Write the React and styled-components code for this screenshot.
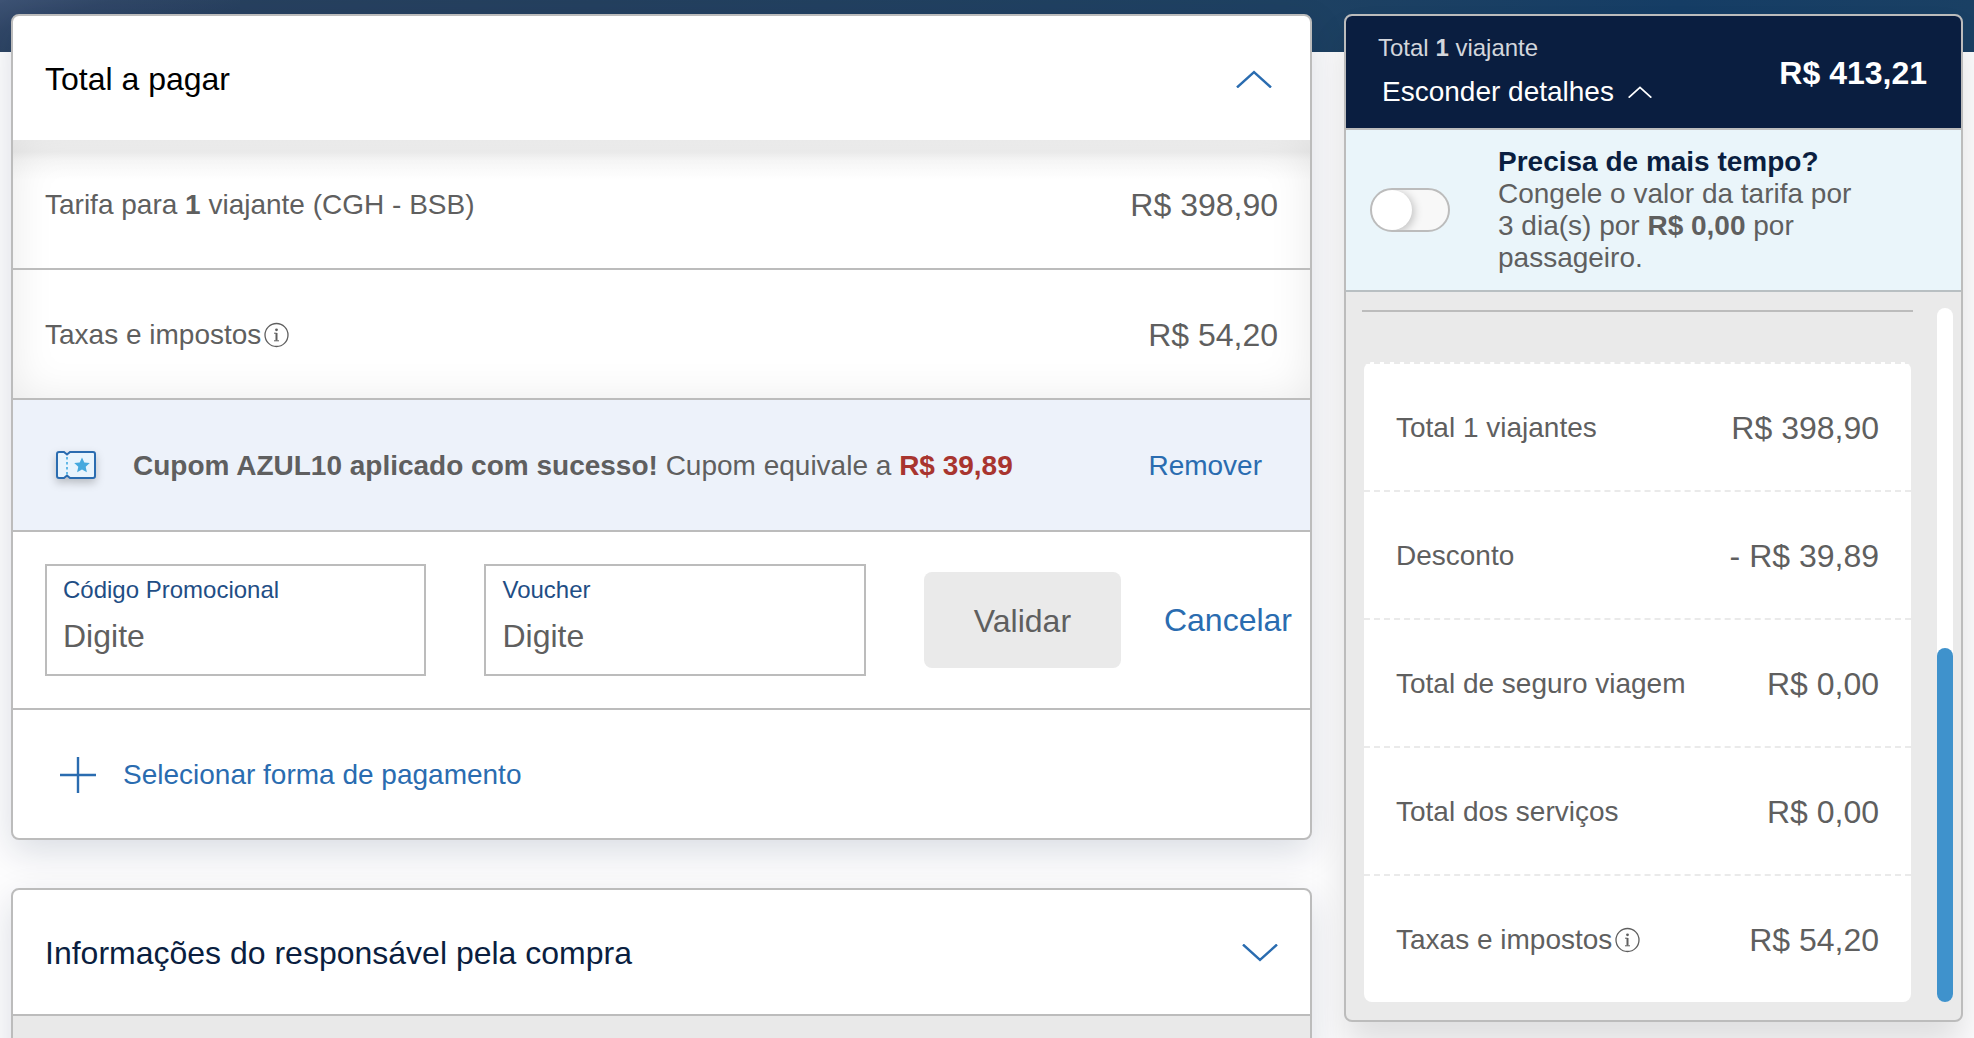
import React, { useState } from 'react';
import styled, { createGlobalStyle } from 'styled-components';

const BLUE = '#2a6cb0';
const NAVY = '#0a1e40';
const GREY = '#5f5f5f';
const LINE = '#bcbcbc';

const GlobalStyle = createGlobalStyle`
  *, *::before, *::after {
    box-sizing: border-box;
  }

  body {
    margin: 0;
    overflow: hidden;
    background: #fdfdfe;
    color: ${GREY};
    font-family: "Liberation Sans", Arial, sans-serif;
    font-size: 28px;
    line-height: 32px;
  }

  button, input {
    font: inherit;
  }
`;

const Page = styled.div`
  min-height: 100vh;
  padding: 14px 11px 0;
  background:
    linear-gradient(165deg, rgba(70, 90, 125, 0.7) 0, rgba(60, 80, 115, 0.4) 30px, transparent 70px) no-repeat 0 0 / 240px 52px,
    linear-gradient(90deg, #29415f 0%, #24405f 30%, #1e4162 65%, #153d65 85%, #1a4064 100%) no-repeat 0 0 / 100% 52px;
`;

const Layout = styled.div`
  display: grid;
  grid-template-columns: minmax(0, 1301fr) minmax(0, 619fr);
  gap: 32px;
  align-items: start;
`;

const Column = styled.main`
  display: flex;
  flex-direction: column;
  gap: 48px;
`;

const Card = styled.section`
  border: 2px solid ${LINE};
  border-radius: 8px;
  background: #fff;
  box-shadow: 0 12px 36px rgba(10, 30, 64, 0.14);
`;

const CardHeader = styled.header`
  display: flex;
  align-items: center;
  justify-content: space-between;
  min-height: 124px;
  padding: 2px 32px 0;
`;

const CardTitle = styled.h2`
  margin: 0;
  font-size: 32px;
  font-weight: 400;
  color: ${props => props.$color};
`;

const IconButton = styled.button`
  display: flex;
  margin-right: ${props => (props.$open ? '6px' : '0')};
  padding: 0;
  border: 0;
  background: none;
  color: ${BLUE};
  cursor: pointer;
`;

const Fares = styled.dl`
  margin: 0;
  background: linear-gradient(#f5f5f5 0, #f0f0f0 12px, #f8f8f8 20px, #fff 40px);
  box-shadow: inset 0 0 44px rgba(0, 0, 0, 0.09);
`;

const Row = styled.div`
  display: flex;
  align-items: center;
  justify-content: space-between;
  min-height: 130px;
  padding: 2px 32px 0;
  border-bottom: 2px solid ${LINE};
`;

const Term = styled.dt`
  display: flex;
  align-items: center;
  white-space: pre;
`;

const Amount = styled.dd`
  margin: 0;
  font-size: 32px;
  white-space: nowrap;
`;

const CouponRow = styled(Row)`
  min-height: 132px;
  padding: 2px 48px 0 40px;
  background: #edf2fa;
`;

const CouponMessage = styled.p`
  display: flex;
  align-items: center;
  gap: 32px;
  margin: 0;
`;

const Saving = styled.strong`
  color: #a8352f;
`;

const TextButton = styled.button`
  display: flex;
  align-items: center;
  gap: 24px;
  padding: 0;
  border: 0;
  background: none;
  color: ${props => props.$color || BLUE};
  font-size: ${props => (props.$large ? '32px' : '28px')};
  line-height: 32px;
  cursor: pointer;
`;

const PromoForm = styled.form`
  display: flex;
  align-items: center;
  padding: 32px 18px 32px 32px;
  border-bottom: 2px solid ${LINE};
`;

const Field = styled.label`
  display: flex;
  flex: 1 1 0;
  flex-direction: column;
  gap: 12px;
  min-width: 0;
  height: 112px;
  margin-right: 58px;
  padding: 8px 16px;
  border: 2px solid ${LINE};
  color: #1f4e85;
  font-size: 24px;
`;

const FieldInput = styled.input`
  width: 100%;
  height: 36px;
  padding: 0;
  border: 0;
  outline: 0;
  background: none;
  color: ${GREY};
  font-size: 32px;

  &::placeholder {
    color: ${GREY};
    opacity: 1;
  }
`;

const SubmitButton = styled.button`
  width: 197px;
  height: 96px;
  margin-right: 43px;
  padding: 2px 0 0;
  border: 0;
  border-radius: 8px;
  background: #eaeaea;
  color: ${GREY};
  font-size: 32px;
`;

const PaymentRow = styled.div`
  display: flex;
  align-items: center;
  min-height: 128px;
  padding: 2px 44px 0;
`;

const ClosedBody = styled.div`
  height: 96px;
  border-top: 2px solid ${LINE};
  background: #e9e9e9;
`;

const Summary = styled.aside`
  overflow: hidden;
  border: 2px solid ${LINE};
  border-radius: 8px;
  background: #eaeaea;
  box-shadow: 0 24px 36px rgba(0, 0, 0, 0.12);
`;

const SummaryHeader = styled.header`
  display: flex;
  align-items: center;
  justify-content: space-between;
  height: 114px;
  padding: 0 34px 0 32px;
  border-bottom: 2px solid ${LINE};
  background: ${NAVY};
  color: #fff;
`;

const SummaryLead = styled.div`
  display: flex;
  flex-direction: column;
  gap: 12px;
  padding-bottom: 4px;
`;

const Travellers = styled.p`
  margin: 0;
  color: #d3d6dc;
  font-size: 24px;
`;

const ToggleDetails = styled(TextButton)`
  gap: 14px;
  padding-left: 4px;
`;

const SummaryTotal = styled.strong`
  padding-top: 2px;
  font-size: 32px;
`;

const Freeze = styled.label`
  display: flex;
  align-items: center;
  gap: 48px;
  height: 162px;
  padding: 0 100px 0 24px;
  border-bottom: 2px solid #b8bfc2;
  background: #eaf5fa;
`;

const Switch = styled.input`
  display: flex;
  flex: none;
  appearance: none;
  width: 80px;
  height: 44px;
  margin: 0;
  overflow: hidden;
  border: 2px solid ${LINE};
  border-radius: 22px;
  background: #f8f8f8;

  &::before {
    content: '';
    width: 40px;
    height: 40px;
    border-radius: 50%;
    background: #fff;
    box-shadow: 2px 2px 10px rgba(0, 0, 0, 0.24);
  }

  &:checked {
    justify-content: flex-end;
    background: #3f92cc;
  }
`;

const FreezeTitle = styled.strong`
  display: block;
  color: ${NAVY};
`;

const Details = styled.div`
  display: flex;
  justify-content: space-between;
  gap: 24px;
  padding: 16px 8px 18px 16px;
`;

const DetailsContent = styled.div`
  flex: 1;
  padding-top: 2px;
`;

const Divider = styled.hr`
  height: 2px;
  margin: 0 0 50px;
  border: 0;
  background: ${LINE};
`;

const Totals = styled.dl`
  margin: 0 2px;
  border-radius: 8px;
  background: #fff;
`;

const TotalsRow = styled(Row)`
  min-height: 128px;
  border-top: 2px dashed #eaeaea;
  border-bottom: 0;
`;

const Track = styled.div`
  display: flex;
  align-items: flex-end;
  width: 16px;
  border-radius: 8px;
  background: #fff;
`;

const Thumb = styled.div`
  width: 100%;
  height: 51%;
  border-radius: 8px;
  background: #3f92cc;
`;

const Chevron = ({ up, width = 36, stroke = 2.4 }) => (
  <svg width={width} height={width / 2} viewBox="0 0 36 18" fill="none" stroke="currentColor" strokeWidth={stroke}>
    <path d={up ? 'M1 17.5 18 2 35 17.5' : 'M1 .5 18 16 35 .5'} />
  </svg>
);

const InfoMark = styled.svg`
  margin-left: 2px;
`;

const InfoIcon = () => (
  <InfoMark width="26" height="26" viewBox="0 0 26 26" fill="none" stroke={GREY} strokeWidth="1.3">
    <circle cx="13.500" cy="13" r="11.500" />
    <path d="M11 11.200h2.500v7" strokeWidth="1" />
    <path d="M13.500 11v7.500" strokeWidth="2" />
    <path d="M11 18.800h5" strokeWidth="1" />
    <circle cx="13.500" cy="7.800" r="1.400" fill={GREY} stroke="none" />
  </InfoMark>
);

const CouponIcon = styled.svg`
  flex: none;
  filter: drop-shadow(0 4px 4px rgba(0, 0, 0, 0.22));
`;

const totals = [
  { label: 'Total 1 viajantes', amount: 'R$ 398,90' },
  { label: 'Desconto', amount: '- R$ 39,89' },
  { label: 'Total de seguro viagem', amount: 'R$ 0,00' },
  { label: 'Total dos serviços', amount: 'R$ 0,00' },
  { label: 'Taxas e impostos', amount: 'R$ 54,20', info: true },
];

const App = () => {
  const [frozen, setFrozen] = useState(false);

  return (
    <Page>
      <GlobalStyle />
      <Layout>
        <Column>
          <Card>
            <CardHeader>
              <CardTitle $color="#000">Total a pagar</CardTitle>
              <IconButton $open aria-label="Recolher total a pagar">
                <Chevron up />
              </IconButton>
            </CardHeader>

            <Fares>
              <Row>
                <Term>Tarifa para <strong>1</strong> viajante (CGH - BSB)</Term>
                <Amount>R$ 398,90</Amount>
              </Row>
              <Row>
                <Term>Taxas e impostos<InfoIcon /></Term>
                <Amount>R$ 54,20</Amount>
              </Row>
            </Fares>

            <CouponRow>
              <CouponMessage>
                <CouponIcon width="48" height="36" viewBox="0 0 48 36" fill="none" stroke={BLUE} strokeWidth="2">
                  <path d="M6 4h5l3 2.500L17 4h23a2 2 0 0 1 2 2v22a2 2 0 0 1-2 2H17l-3-2.500L11 30H6a2 2 0 0 1-2-2V6a2 2 0 0 1 2-2z" fill="#e8f4fd" />
                  <path d="M14 9v18" stroke="#62b8e6" strokeDasharray="2.500 2.500" />
                  <path d="M29 9.500l2.300 5 5.500.6-4.100 3.700 1.200 5.400-4.900-2.700-4.900 2.700 1.200-5.400-4.100-3.700 5.500-.6z" fill="#46a9de" stroke="none" />
                </CouponIcon>
                <span>
                  <strong>Cupom AZUL10 aplicado com sucesso!</strong> Cupom equivale a <Saving>R$ 39,89</Saving>
                </span>
              </CouponMessage>
              <TextButton>Remover</TextButton>
            </CouponRow>

            <PromoForm onSubmit={e => e.preventDefault()}>
              <Field>
                Código Promocional
                <FieldInput placeholder="Digite" />
              </Field>
              <Field>
                Voucher
                <FieldInput placeholder="Digite" />
              </Field>
              <SubmitButton>Validar</SubmitButton>
              <TextButton type="button" $large>Cancelar</TextButton>
            </PromoForm>

            <PaymentRow>
              <TextButton>
                <svg width="42" height="36" viewBox="0 0 42 36" stroke="currentColor" strokeWidth="2.4">
                  <path d="M3 18h36M21 0v36" />
                </svg>
                Selecionar forma de pagamento
              </TextButton>
            </PaymentRow>
          </Card>

          <Card>
            <CardHeader>
              <CardTitle $color={NAVY}>Informações do responsável pela compra</CardTitle>
              <IconButton aria-label="Expandir informações do responsável">
                <Chevron />
              </IconButton>
            </CardHeader>
            <ClosedBody />
          </Card>
        </Column>

        <Summary>
          <SummaryHeader>
            <SummaryLead>
              <Travellers>Total <strong>1</strong> viajante</Travellers>
              <ToggleDetails $color="#fff">
                Esconder detalhes
                <Chevron up width={24} stroke={2.6} />
              </ToggleDetails>
            </SummaryLead>
            <SummaryTotal>R$ 413,21</SummaryTotal>
          </SummaryHeader>

          <Freeze>
            <Switch type="checkbox" role="switch" checked={frozen} onChange={() => setFrozen(!frozen)} />
            <span>
              <FreezeTitle>Precisa de mais tempo?</FreezeTitle>
              Congele o valor da tarifa por 3 dia(s) por <strong>R$ 0,00</strong> por passageiro.
            </span>
          </Freeze>

          <Details>
            <DetailsContent>
              <Divider />
              <Totals>
                {totals.map(item => (
                  <TotalsRow key={item.label}>
                    <Term>{item.label}{item.info && <InfoIcon />}</Term>
                    <Amount>{item.amount}</Amount>
                  </TotalsRow>
                ))}
              </Totals>
            </DetailsContent>
            <Track>
              <Thumb />
            </Track>
          </Details>
        </Summary>
      </Layout>
    </Page>
  );
};

export default App;
